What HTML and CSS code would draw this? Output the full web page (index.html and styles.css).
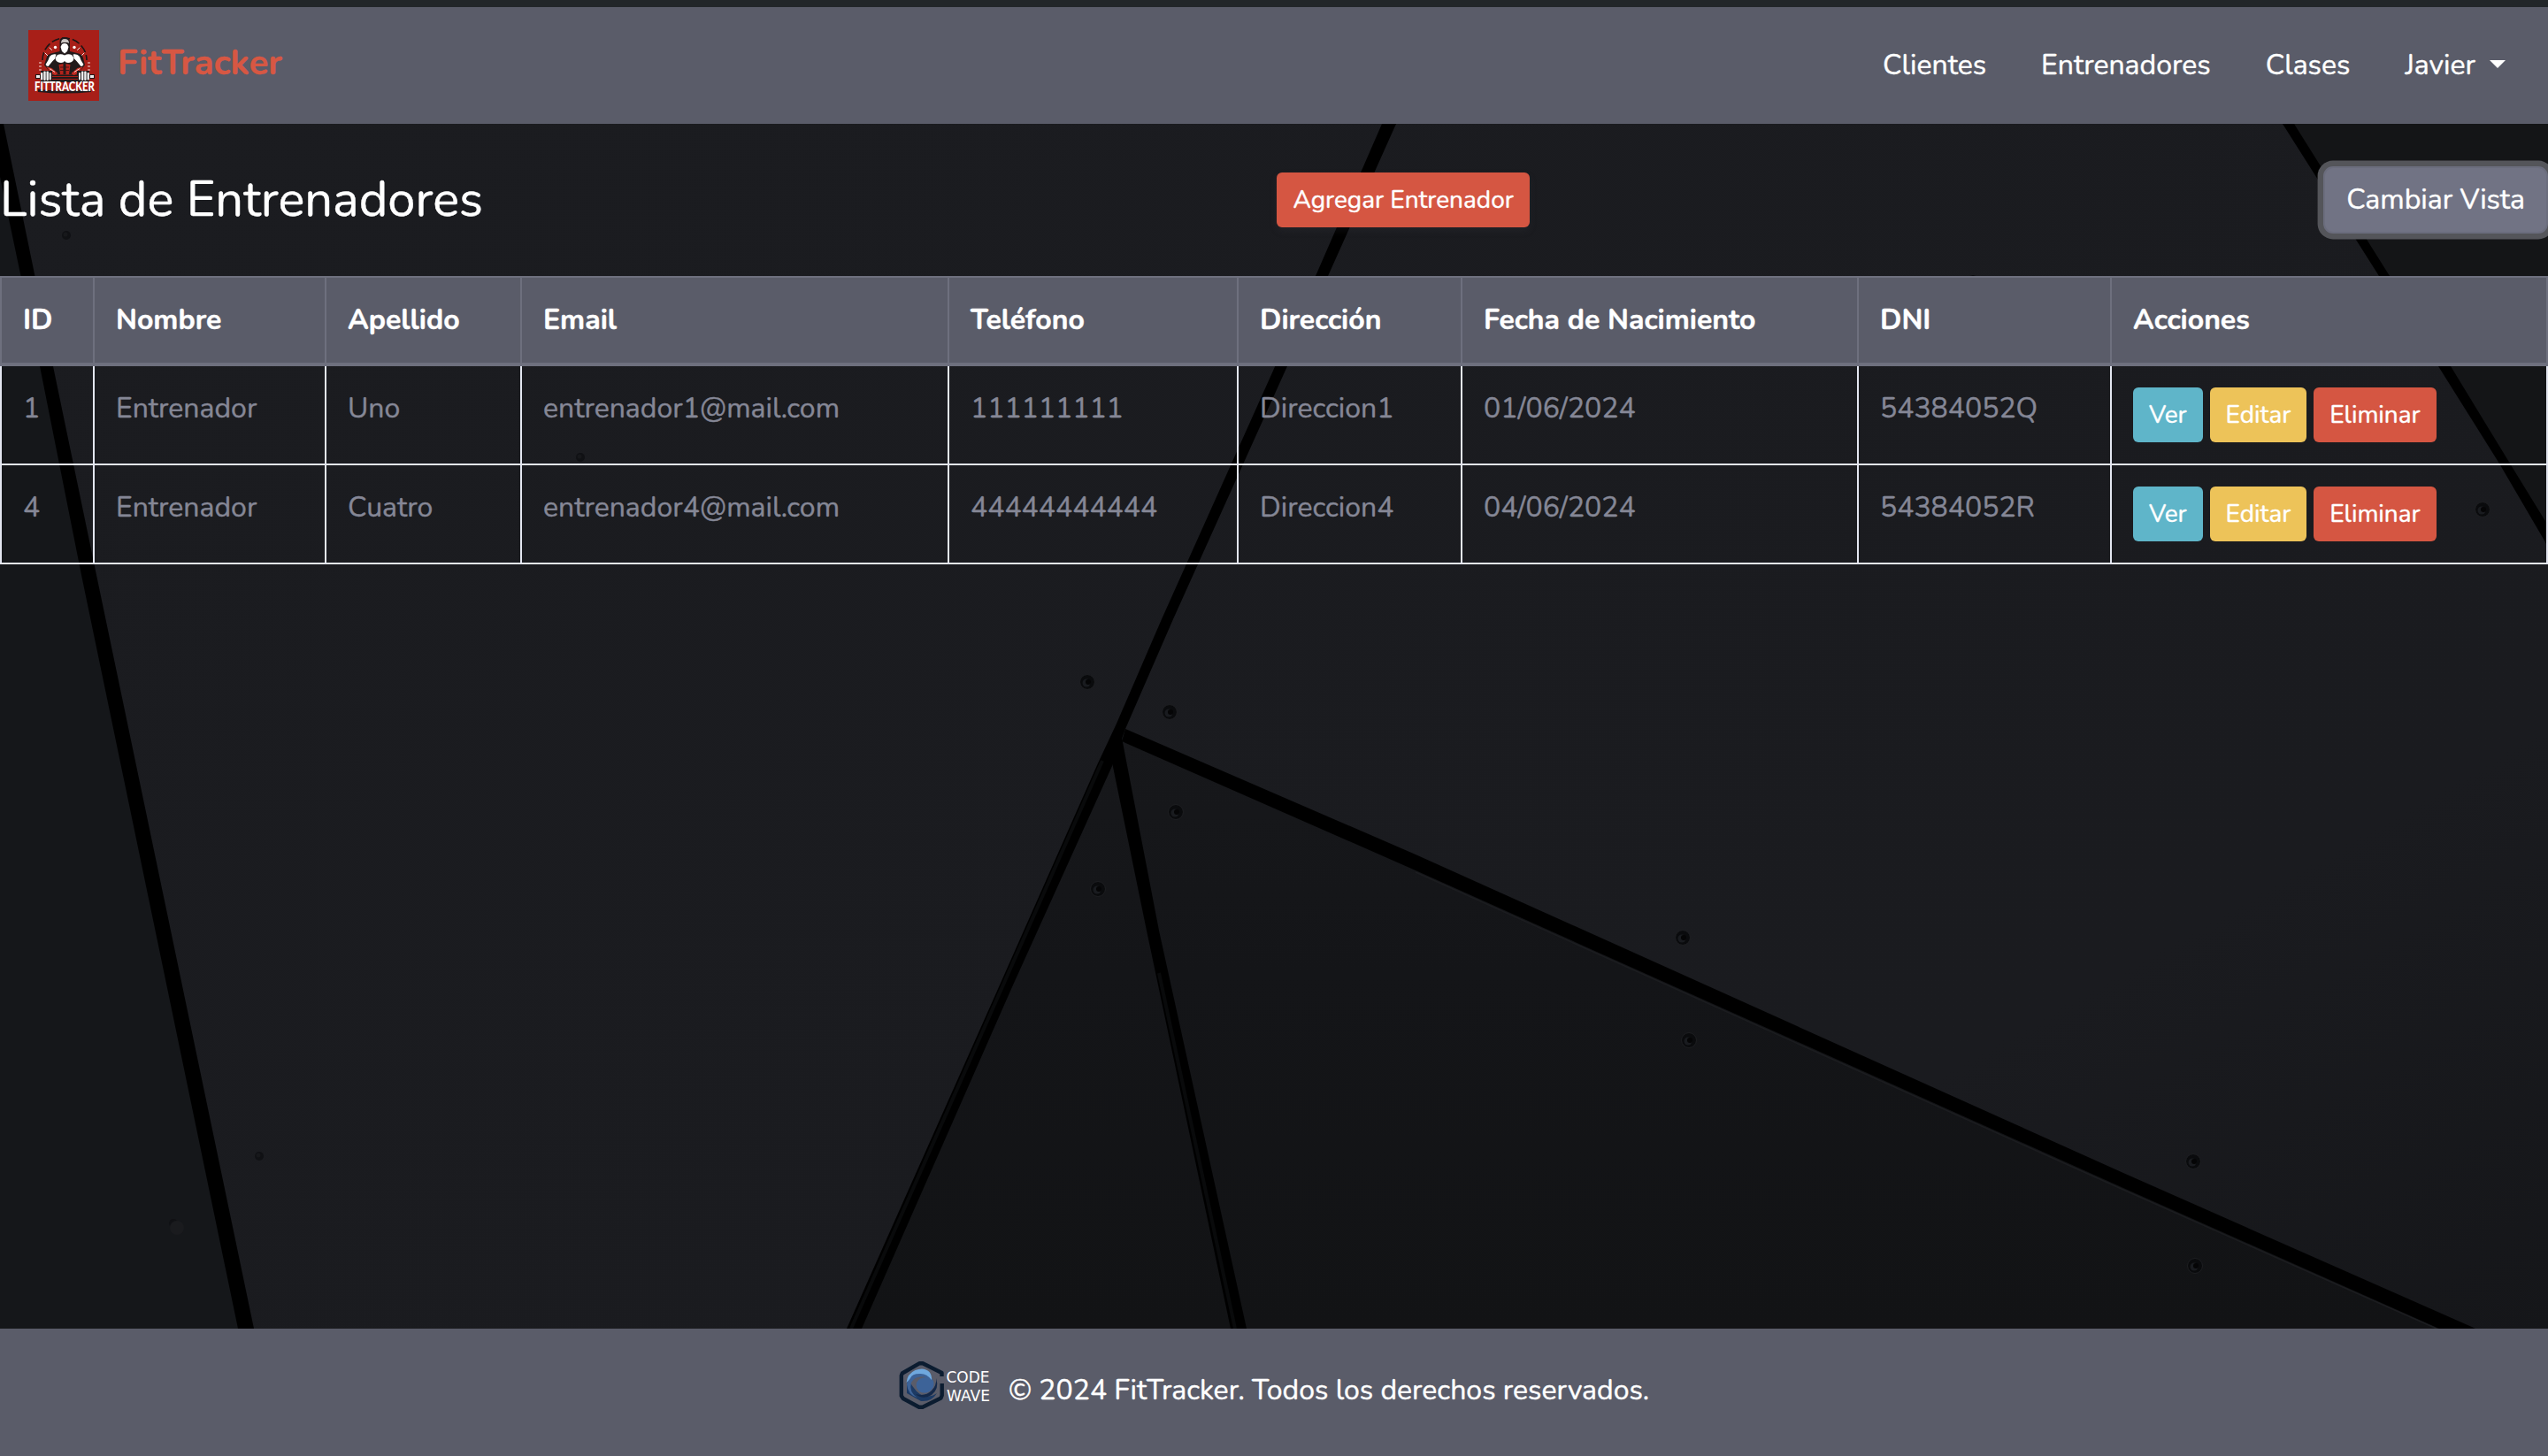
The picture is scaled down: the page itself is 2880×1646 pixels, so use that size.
FILE: index.html
```html
<!DOCTYPE html>
<html lang="es">
<head>
<meta charset="utf-8">
<title>FitTracker</title>
<link rel="stylesheet" href="styles.css">
</head>
<body>
<svg class="backdrop" viewBox="0 0 2880 1646" preserveAspectRatio="none" aria-hidden="true">
  <defs>
    <linearGradient id="panelLow" x1="0" y1="0" x2="0" y2="1"><stop offset="0" stop-color="#17181b"/><stop offset=".4" stop-color="#141518"/><stop offset="1" stop-color="#121315"/></linearGradient>
    <linearGradient id="panelMain" x1="0" y1="0" x2="1" y2="1"><stop offset="0" stop-color="#1b1c20"/><stop offset=".75" stop-color="#1a1b1f"/><stop offset="1" stop-color="#141518"/></linearGradient>
    <g id="screw"><circle r="8" fill="#0a0b0d"/><circle r="8.500" fill="none" stroke="#1c1d20" stroke-width="1"/><circle cx="-1" cy="1" r="4.500" fill="#191b1f"/><circle cx="1" r="3" fill="#050506"/></g>
    <g id="screwFaint"><circle r="5" fill="#101114"/><circle cx="-1" cy="-1" r="2.500" fill="#17181b"/></g>
  </defs>
  <rect width="2880" height="1646" fill="url(#panelMain)"/>
  <path d="M0 200L280 1502H0Z" fill="#15171a"/>
  <path d="M1262 830L966 1502H2780Z" fill="url(#panelLow)"/>
  <path d="M2586 140L2880 600V140Z" fill="#141517"/>
  <g fill="#000">
    <path d="M-20 100H-5L4 140L37 300L60 414L109 650L287 1502H269L92 650L45 414L21 300L0 200Z"/>
    <path d="M1562 140H1578L1501 312L1326 700L1272 824L1257 866L1143 1118L974 1502H957L1128 1118L1240 865L1262 818L1313 700L1487 312Z"/>
    <path d="M1257 862L1268 834L1310 1052L1409 1502H1391L1296 1052Z"/>
    <path d="M1268 838L1272 824L1600 966L2400 1326L2798 1502H2757L2400 1343L1600 984Z"/>
    <path d="M2580 140H2593L2701 312L2770 414L2837 524L2880 594V618L2825 524L2756 414L2689 312Z"/>
  </g>
  <path d="M1310 1100L1396 1502M1246 860L962 1502" fill="none" stroke="#090a0b" stroke-width="4"/>
  <path d="M1600 986L2400 1345L2754 1502" fill="none" stroke="#1c1d20" stroke-width="1.500"/>
  <use href="#screw" x="1229" y="771"/><use href="#screw" x="1322" y="805"/>
  <use href="#screw" x="1329" y="918"/><use href="#screw" x="1241" y="1005"/>
  <use href="#screw" x="1902" y="1060"/><use href="#screw" x="1909" y="1176"/>
  <use href="#screw" x="2479" y="1313"/><use href="#screw" x="2481" y="1431"/>
  <use href="#screw" x="2806" y="576"/><use href="#screw" x="2230" y="319"/>
  <use href="#screwFaint" x="293" y="1307"/><use href="#screwFaint" x="75" y="266"/><use href="#screwFaint" x="656" y="517"/>
  <circle cx="196" cy="1383" r="5" fill="#101114"/><circle cx="200" cy="1388" r="8" fill="#1a1b1e"/>
</svg>

<div class="page">
  <header class="navbar">
    <a class="brand">
      <svg class="brand-logo" viewBox="0 0 80 80">
        <rect width="80" height="80" fill="#a81f18"/>
        <path d="M16 34a25 25 0 0 1 50 0" fill="none" stroke="#1b1515" stroke-width="1.600" stroke-dasharray="9 3"/>
        <g stroke="#fff" stroke-width=".9" stroke-linecap="round"><path d="M12.500 37h2M12.500 41h2M12.500 45h2M67.500 37h2M67.500 41h2M67.500 45h2M19 26l3 3M24 20l2.500 2.500M63 26l-3 3M58 20l-2.500 2.500"/></g>
        <circle cx="30.500" cy="19.500" r="1.700" fill="#fff"/><circle cx="52" cy="19.500" r="1.700" fill="#fff"/>
        <path d="M35.500 24V13q0-5 5.500-5t6 5v11l10 2.500q4 1 5 5l2 8-9 11H27l-9-11 2.500-8q1-4 5-5Z" fill="#211a1b"/>
        <path d="M37 15q0-5 4-5 5 0 5 5l-2-1h-5Z" fill="#c9c4c2"/>
        <path d="M38 16q3-2 6 0l1.500 3-1.500 5-3 2.500-3-2.500-1.500-5Z" fill="#fff"/>
        <path d="M33 28q4-1.500 8 .5 4-2 8-.5 3 3 2 6-2 3-6 3-3 0-4-2-1 2-4 2-4 0-6-3-1-3 2-6Z" fill="#fff"/>
        <path d="M31.500 27.500q-5-1-7.500 2.500l-1.500 4-3 5q1 2 3 2l5-6 3-3q0-2 1-4.500ZM50.500 27.500q5-1 7.500 2.500l1.500 4 3 5q-1 2-3 2l-5-6-3-3q0-2-1-4.500Z" fill="#fff"/>
        <path d="M20.500 41.500l6 1.500 7 6-3 2-5-2.500ZM61.500 41.500l-6 1.500-7 6 3 2 5-2.500Z" fill="#c42c22"/>
        <path d="M24 43.500l6 4M58 43.500l-6 4" stroke="#fff" stroke-width=".8"/>
        <path d="M34.500 39l5-1v12h-3.500ZM47.500 39l-5-1v12H46Z" fill="#b3231b"/>
        <path d="M36 42h10M36 45.500h10" stroke="#3a1213" stroke-width=".9"/>
        <path d="M8 50h6v-4h13v5h28v-5h14v4h6v5h-6v4H14v-4H8Z" fill="#211a1b"/><path d="M27 52.500h29M27 55.500h29" stroke="#a81f18" stroke-width="1"/>
        <g fill="#eee"><rect x="9" y="51" width="4" height="3"/><rect x="14" y="48" width="2.400" height="8.500" rx="1"/><rect x="17.300" y="46.500" width="2.400" height="10.500" rx="1"/><rect x="20.500" y="46.500" width="2.400" height="10.500" rx="1"/><rect x="23.700" y="48" width="2" height="8.500" rx="1"/><rect x="57" y="48" width="2" height="8.500" rx="1"/><rect x="60" y="46.500" width="2.400" height="10.500" rx="1"/><rect x="63.200" y="46.500" width="2.400" height="10.500" rx="1"/><rect x="66.500" y="48" width="2.400" height="8.500" rx="1"/><rect x="70" y="51" width="4" height="3"/></g>
        <path d="M11 67q30 3 60 0v3q-30 3-60 0Z" fill="#211a1b"/>
        <text class="brand-logo-text" x="7" y="69" textLength="68" lengthAdjust="spacingAndGlyphs">FITTRACKER</text>
      </svg>
      <span class="brand-name">FitTracker</span>
    </a>
    <nav class="menu">
      <a class="menu-link">Clientes</a>
      <a class="menu-link">Entrenadores</a>
      <a class="menu-link">Clases</a>
      <a class="menu-link menu-user">Javier<i class="caret"></i></a>
    </nav>
  </header>

  <main class="content">
    <div class="heading">
      <h1 class="title">Lista de Entrenadores</h1>
      <button class="btn btn-sm btn-red btn-shadow">Agregar Entrenador</button>
      <button class="btn btn-toggle">Cambiar Vista</button>
    </div>
    <table class="trainers">
      <colgroup><col class="c-id"><col class="c-name"><col class="c-last"><col class="c-mail"><col class="c-phone"><col class="c-addr"><col class="c-birth"><col class="c-dni"><col class="c-act"></colgroup>
      <thead>
        <tr><th>ID</th><th>Nombre</th><th>Apellido</th><th>Email</th><th>Teléfono</th><th>Dirección</th><th>Fecha de Nacimiento</th><th>DNI</th><th>Acciones</th></tr>
      </thead>
      <tbody>
        <tr><td>1</td><td>Entrenador</td><td>Uno</td><td>entrenador1@mail.com</td><td>111111111</td><td>Direccion1</td><td>01/06/2024</td><td>54384052Q</td>
          <td><div class="btn-row"><button class="btn btn-sm btn-blue">Ver</button><button class="btn btn-sm btn-yellow">Editar</button><button class="btn btn-sm btn-red">Eliminar</button></div></td></tr>
        <tr><td>4</td><td>Entrenador</td><td>Cuatro</td><td>entrenador4@mail.com</td><td>44444444444</td><td>Direccion4</td><td>04/06/2024</td><td>54384052R</td>
          <td><div class="btn-row"><button class="btn btn-sm btn-blue">Ver</button><button class="btn btn-sm btn-yellow">Editar</button><button class="btn btn-sm btn-red">Eliminar</button></div></td></tr>
      </tbody>
    </table>
  </main>

  <footer class="footer">
    <svg class="footer-logo" viewBox="0 0 104 56">
      <path d="M48.500 18v-4L27 3.300h-4L3.800 14.500 2.800 17v23l2 3 18 9.700h4L47.500 42.500l1.200-3V26" fill="none" stroke="#0b1c30" stroke-width="4.400" stroke-linejoin="round"/>
      <path d="M11 22l-2 4v11l16 9q12 1 18-9-7 5-15 3T11 22Z" fill="#1c3a64"/>
      <path d="M42 20q4 12-5 19-10 6-18-1 11 3 18-4 6-6 5-14Z" fill="#14294a"/>
      <path d="M35 18q6 5 4 12-5 9-14 6-7-4-5-11 3-6 11-6-12-3-17 6-3 11 7 17-11-3-12-15 1-12 14-13 7 0 12 4Z" fill="#3d6398"/>
      <path d="M8.500 25q1-10 10-14 10-4 16 2 3 4 2.500 9-6-8-14-7-8 0-10 5-2 3-4.500 5Z" fill="#6fa8de"/>
      <text class="footer-logo-text" x="53.500" y="25" textLength="49" lengthAdjust="spacingAndGlyphs">CODE</text>
      <text class="footer-logo-text" x="54" y="46" textLength="49" lengthAdjust="spacingAndGlyphs">WAVE</text>
    </svg>
    <span class="footer-text">© 2024 FitTracker. Todos los derechos reservados.</span>
  </footer>
</div>
</body>
</html>
```
FILE: styles.css
```css
* { box-sizing: border-box; }
body { margin: 0; background: #1b1c20; color: #fff; font: 400 32px/48px Nunito, Lato, sans-serif; -webkit-text-stroke: .4px; }
svg text { -webkit-text-stroke: 0; }
.backdrop { position: absolute; left: 0; top: 0; width: 100%; height: 1646px; z-index: -1; }
.page { display: flex; flex-direction: column; height: 1646px; }
.navbar { display: flex; justify-content: space-between; align-items: center; height: 140px; border-top: 8px solid #222629; background: #5a5c69; padding: 0 48px 0 32px; }
.brand { display: flex; align-items: center; gap: 20px; }
.brand-logo { display: block; width: 80px; height: 80px; overflow: visible; }
.brand-logo-text { font: 900 14.500px Lato, sans-serif; fill: #fff; }
.brand-name { padding: 0 0 6px 1px; font-size: 40px; font-weight: 700; color: #d75743; }
.menu { display: flex; gap: 62px; }
.menu-user { display: flex; align-items: center; gap: 16px; }
.caret { margin-top: -3px; border: 9px solid transparent; border-top-color: #fff; border-bottom: 0; }
.content { flex: 1; }
.heading { display: flex; justify-content: space-between; align-items: center; height: 172px; }
.title { margin: 0; font-size: 56px; font-weight: 400; line-height: 68px; }
.btn { border: 2px solid transparent; border-radius: 11px; padding: 12px 24px; color: #fff; font: inherit; white-space: nowrap; }
.btn-sm { border-radius: 6px; padding: 8px 16px; font-size: 28px; line-height: 42px; }
.btn-red { background: #d55642; }
.btn-blue { background: #5fb5c9; }
.btn-yellow { background: #edc359; }
.btn-toggle { background: #717384; border-color: #6b6d7d; box-shadow: 0 0 0 6.400px #54555a; }
.btn-shadow { box-shadow: 0 4px 8px rgba(58, 59, 69, .2); }
.trainers { width: 2880px; table-layout: fixed; border-collapse: collapse; color: #858796; }
.trainers th, .trainers td { border: 2px solid #e3e6f0; padding: 24px; text-align: left; vertical-align: top; }
.trainers th { border-color: #6e707e; border-bottom-width: 4px; background: #5a5c69; color: #fff; font-weight: 700; }
.btn-row { display: flex; gap: 8px; }
.c-id { width: 105px; } .c-name { width: 262px; } .c-last { width: 221px; } .c-mail { width: 483px; } .c-phone { width: 327px; } .c-addr { width: 253px; } .c-birth { width: 448px; } .c-dni { width: 286px; }
.footer { display: flex; justify-content: center; align-items: center; gap: 20px; height: 144px; background: #5a5c69; }
.footer-logo { width: 104px; height: 56px; margin-bottom: 16px; }
.footer-logo-text { font: 17.500px "DejaVu Sans", sans-serif; fill: #fff; }
.footer-text { padding-bottom: 4px; }
```
